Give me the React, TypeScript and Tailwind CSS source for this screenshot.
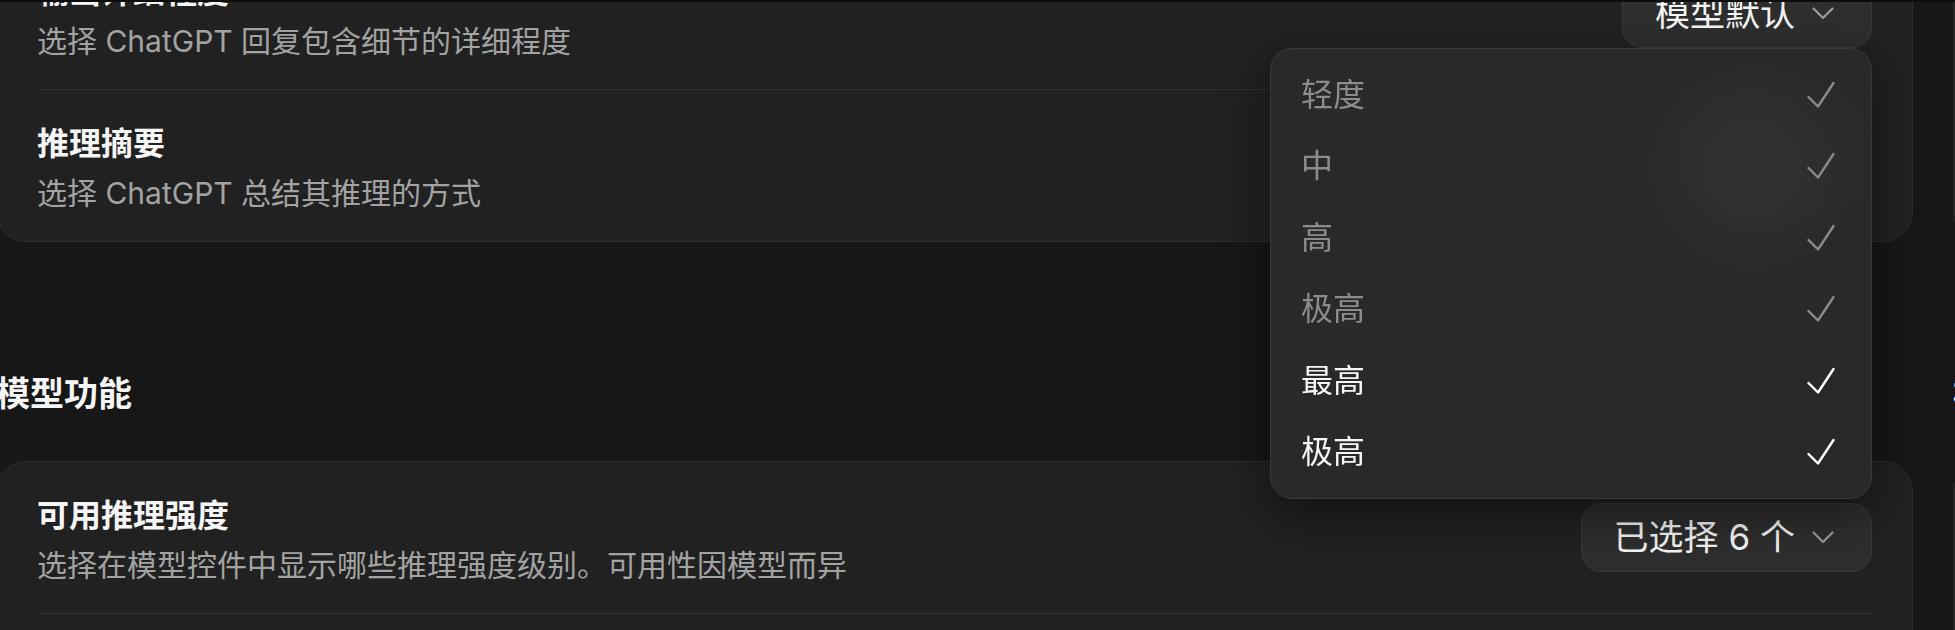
import type { ReactNode } from 'react';

interface Level {
  label: string;
  active: boolean;
}

const LEVELS: Level[] = [
  { label: '轻度', active: false },
  { label: '中', active: false },
  { label: '高', active: false },
  { label: '极高', active: false },
  { label: '最高', active: true },
  { label: '极高', active: true },
];

function Chevron() {
  return (
    <svg width="22" height="13" viewBox="0 0 22 13" fill="none" className="shrink-0">
      <path d="M1.5 1.5 11 11 20.5 1.5" stroke="#9a9a9a" strokeWidth="2.3" strokeLinecap="round" strokeLinejoin="round" />
    </svg>
  );
}

function CheckMark({ active }: { active: boolean }) {
  return (
    <svg width="28" height="28" viewBox="0 0 28 28" fill="none" className="shrink-0">
      <path
        d="M1.5 16 11 25.5 26.5 2"
        stroke={active ? '#ffffff' : '#8a8a8a'}
        strokeWidth="2.4"
        strokeLinecap="round"
        strokeLinejoin="round"
      />
    </svg>
  );
}

function SelectButton({ label }: { label: string }) {
  return (
    <button className="flex h-[69px] shrink-0 items-center gap-[17px] rounded-[20px] border border-[#3a3a3a] bg-[#2e2e2e] pl-[32px] pr-[37px] text-[35px] leading-none text-[#f5f5f5]">
      <span>{label}</span>
      <Chevron />
    </button>
  );
}

function LevelMenu() {
  return (
    <div className="absolute right-0 top-full z-20 w-[602px] overflow-hidden rounded-[22px] border border-[#3a3a3a] bg-[#2a2a2a]/95 py-[10px] shadow-[0_16px_48px_rgba(0,0,0,0.45)] backdrop-blur-3xl">
      {/* control of the row underneath, showing faintly through the blur */}
      <div className="pointer-events-none absolute left-[371px] top-[9px] h-[220px] w-[220px] rounded-full bg-[radial-gradient(circle,rgba(255,255,255,0.035)_0%,rgba(255,255,255,0.015)_45%,transparent_70%)]" />
      {LEVELS.map((lv, i) => (
        <div key={i} className="relative flex h-[71.5px] items-center justify-between pl-[30px] pr-[36px]">
          <span className={`text-[32px] leading-none ${lv.active ? 'text-[#f5f5f5]' : 'text-[#8c8c8c]'}`}>{lv.label}</span>
          <CheckMark active={lv.active} />
        </div>
      ))}
    </div>
  );
}

function SettingRow({ title, desc, control, last }: { title: string; desc: string; control: ReactNode; last?: boolean }) {
  return (
    <div className={`mx-[40px] flex items-center justify-between gap-8 ${last ? '' : 'border-b border-[#303030]'}`}>
      <div className="pb-[26px] pt-[32px]">
        <div className="text-[32px] font-semibold leading-[44px] text-[#f5f5f5]">{title}</div>
        <div className="mt-[5px] text-[30px] leading-[44px] text-[#a3a3a3]">{desc}</div>
      </div>
      {control}
    </div>
  );
}

function Card({ children }: { children: ReactNode }) {
  return <div className="rounded-[30px] border border-[#2d2d2d] bg-[#212121]">{children}</div>;
}

function SectionHeading({ children }: { children: ReactNode }) {
  return <h2 className="pb-[43px] pt-[128px] text-[34px] font-semibold leading-[48px] text-[#f5f5f5]">{children}</h2>;
}

export default function App() {
  return (
    <div className="relative h-[630px] w-full overflow-hidden bg-[#171717] font-[Inter,'Noto_Sans_CJK_SC',sans-serif]">
      <div className="absolute inset-x-0 top-0 z-30 h-[2px] bg-[#0d0d0d]" />
      <div className="-ml-[4px] -mt-[63px] flex gap-[40px]">
        <div className="w-[1917px] shrink-0">
          <Card>
            <SettingRow
              title="输出详细程度"
              desc="选择 ChatGPT 回复包含细节的详细程度"
              control={
                <div className="relative">
                  <SelectButton label="模型默认" />
                  <LevelMenu />
                </div>
              }
            />
            <SettingRow title="推理摘要" desc="选择 ChatGPT 总结其推理的方式" control={<SelectButton label="自动" />} last />
          </Card>

          <SectionHeading>模型功能</SectionHeading>

          <Card>
            <SettingRow
              title="可用推理强度"
              desc="选择在模型控件中显示哪些推理强度级别。可用性因模型而异"
              control={<SelectButton label="已选择 6 个" />}
            />
            <SettingRow title="网页搜索" desc="允许 ChatGPT 在需要时搜索网页" control={<SelectButton label="开启" />} last />
          </Card>
        </div>

        <div className="w-[1917px] shrink-0">
          <Card>
            <SettingRow title="语言" desc="选择界面显示的语言" control={<SelectButton label="自动检测" />} />
            <SettingRow title="主题" desc="选择应用的外观" control={<SelectButton label="深色" />} last />
          </Card>

          <SectionHeading>模型控件</SectionHeading>

          <Card>
            <SettingRow title="默认模型" desc="选择新对话使用的模型" control={<SelectButton label="自动" />} />
            <SettingRow title="记忆" desc="允许 ChatGPT 记住对话中的信息" control={<SelectButton label="开启" />} last />
          </Card>
        </div>
      </div>
    </div>
  );
}
